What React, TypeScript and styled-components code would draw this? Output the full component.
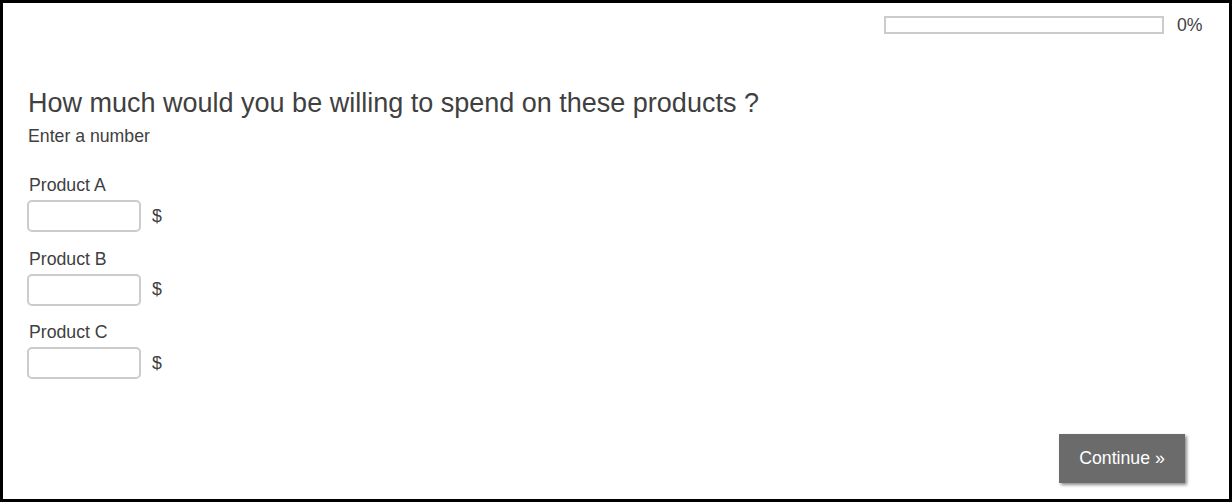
import React from "react";
import styled, { createGlobalStyle } from "styled-components";

const Global = createGlobalStyle`
  html, body { margin: 0; padding: 0; background: #fff; }
  body { font-family: "Liberation Sans", Arial, sans-serif; color: #404040; }
`;

const Frame = styled.div`
  box-sizing: border-box;
  width: 1232px;
  height: 502px;
  border: 3px solid #000;
  padding: 13px 26px 0 24px;
  display: flex;
  flex-direction: column;
`;

const ProgressRow = styled.div`
  display: flex;
  justify-content: flex-end;
  align-items: center;
  gap: 13px;
  height: 18px;
`;

const Track = styled.div`
  box-sizing: border-box;
  width: 280px;
  height: 18px;
  border: 2px solid #ccc;
  background: #fff;
`;

const Fill = styled.div`
  height: 100%;
  background: #8a8a8a;
`;

const Percent = styled.span`
  font-size: 17.7px;
  width: 26px;
  white-space: nowrap;
`;

const Question = styled.h1`
  margin: 54px 0 0 1px;
  font-size: 27px;
  font-weight: normal;
  line-height: 31px;
`;

const Hint = styled.p`
  margin: 7px 0 0 1px;
  font-size: 17.7px;
  line-height: 21px;
`;

const Fields = styled.div`
  margin-top: 28px;
  display: flex;
  flex-direction: column;
  gap: 16.5px;
`;

const Field = styled.div`
  display: flex;
  flex-direction: column;
  gap: 4px;
`;

const Label = styled.label`
  font-size: 17.7px;
  line-height: 21px;
  padding-left: 2px;
`;

const InputRow = styled.div`
  display: flex;
  align-items: center;
  gap: 11px;
`;

const NumberInput = styled.input`
  box-sizing: border-box;
  width: 114px;
  height: 32px;
  border: 2px solid #ccc;
  border-radius: 5px;
  outline: none;
  padding: 0 6px;
  font-family: inherit;
  font-size: 16px;
`;

const Unit = styled.span`
  font-size: 17.7px;
`;

const Footer = styled.div`
  margin-top: auto;
  display: flex;
  justify-content: flex-end;
  padding: 0 18px 16px 0;
`;

const ContinueButton = styled.button`
  width: 126px;
  height: 49px;
  border: none;
  background: #6b6b6b;
  color: #fff;
  font-family: inherit;
  font-size: 17.7px;
  box-shadow: 2px 2px 3px rgba(0, 0, 0, 0.45);
  cursor: pointer;
`;

const products = ["Product A", "Product B", "Product C"];

export default function App() {
  const progress = 0;
  return (
    <>
      <Global />
      <Frame>
        <ProgressRow>
          <Track>
            <Fill style={{ width: `${progress}%` }} />
          </Track>
          <Percent>{progress}%</Percent>
        </ProgressRow>
        <Question>How much would you be willing to spend on these products ?</Question>
        <Hint>Enter a number</Hint>
        <Fields>
          {products.map((p) => (
            <Field key={p}>
              <Label>{p}</Label>
              <InputRow>
                <NumberInput type="text" aria-label={p} />
                <Unit>$</Unit>
              </InputRow>
            </Field>
          ))}
        </Fields>
        <Footer>
          <ContinueButton>Continue »</ContinueButton>
        </Footer>
      </Frame>
    </>
  );
}
